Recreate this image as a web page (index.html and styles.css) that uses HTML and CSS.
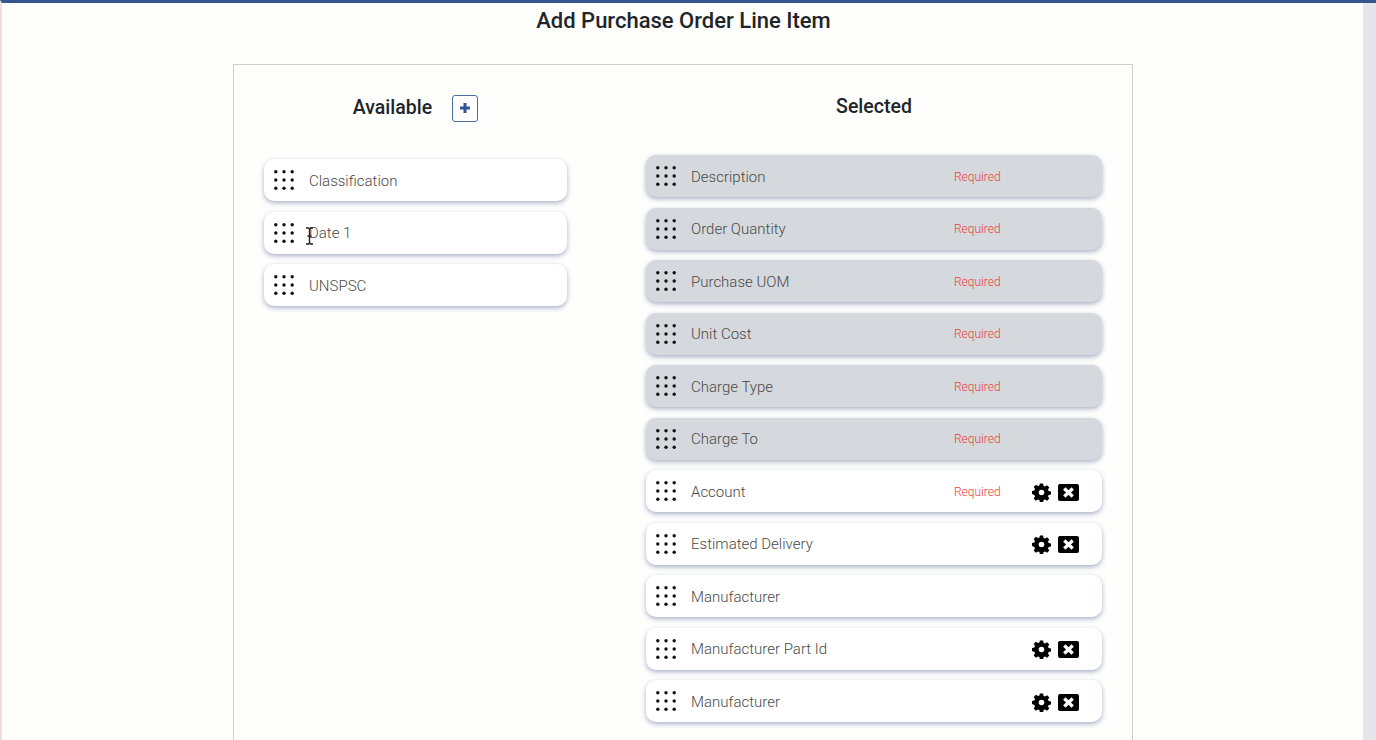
FILE: index.html
```html
<!DOCTYPE html>
<html lang="en">
<head>
    <meta charset="UTF-8">
    <meta name="viewport" content="width=device-width, initial-scale=1.0">
    <title>Add Purchase Order Line Item</title>
    <link rel="stylesheet" href="styles.css">
</head>
<body>

    <svg class="icon-defs" width="0" height="0">
        <symbol id="dots" viewBox="0 0 20 20">
            <circle cx="1.800" cy="1.800" r="1.700"/><circle cx="10" cy="1.800" r="1.700"/><circle cx="18.200" cy="1.800" r="1.700"/>
            <circle cx="1.800" cy="10" r="1.700"/><circle cx="10" cy="10" r="1.700"/><circle cx="18.200" cy="10" r="1.700"/>
            <circle cx="1.800" cy="18.200" r="1.700"/><circle cx="10" cy="18.200" r="1.700"/><circle cx="18.200" cy="18.200" r="1.700"/>
        </symbol>
        <symbol id="gear" viewBox="-0.500 -0.500 19 19">
            <path fill-rule="evenodd" d="M7.400 0h3.200l.5 2.400 1.400.6 2.100-1.300 2.200 2.200-1.300 2.100.6 1.400 2.400.5v3.200l-2.400.5-.6 1.400 1.300 2.100-2.200 2.200-2.100-1.300-1.400.6-.5 2.400H7.400l-.5-2.400-1.400-.6-2.100 1.300-2.200-2.200 1.300-2.100-.6-1.400L-.5 10.600V7.400l2.400-.5.600-1.400-1.300-2.100 2.200-2.200 2.100 1.300 1.400-.6zM9 6.200a2.800 2.800 0 1 0 0 5.600 2.800 2.800 0 0 0 0-5.600z"/>
        </symbol>
        <symbol id="close-box" viewBox="0 0 21 17">
            <rect width="21" height="17" rx="2"/>
            <path d="M6.300 4.600l8.400 7.800M14.700 4.600l-8.400 7.800" stroke="#fff" stroke-width="3.400" fill="none"/>
        </symbol>
    </svg>

    <main class="page">
        <h1 class="page-title">Add Purchase Order Line Item</h1>

        <div class="panel">
            <!-- Available fields -->
            <section class="col col-available">
                <div class="col-head">
                    <h2>Available</h2>
                    <button class="add-btn">
                        <svg width="12" height="12" viewBox="0 0 12 12"><path d="M6 1v10M1 6h10" stroke="#2f5597" stroke-width="3"/></svg>
                    </button>
                </div>
                <div class="field-list">
                    <div class="field"><svg class="grip"><use href="#dots"/></svg><span class="field-name">Classification</span></div>
                    <div class="field">
                        <svg class="grip"><use href="#dots"/></svg><span class="field-name">Date 1</span>
                        <!-- mouse cursor caught in the shot -->
                        <svg class="cursor" width="9" height="18" viewBox="0 0 9 18"><path d="M1 1h2.500L4.500 2l1-1H8M4.500 2v14M1 17h2.500l1-1 1 1H8M2.500 9h4" stroke="#222" stroke-width="1.400" fill="none"/></svg>
                    </div>
                    <div class="field"><svg class="grip"><use href="#dots"/></svg><span class="field-name">UNSPSC</span></div>
                </div>
            </section>

            <!-- Selected fields -->
            <section class="col col-selected">
                <div class="col-head">
                    <h2>Selected</h2>
                </div>
                <div class="field-list">
                    <div class="field locked"><svg class="grip"><use href="#dots"/></svg><span class="field-name">Description</span><span class="required">Required</span></div>
                    <div class="field locked"><svg class="grip"><use href="#dots"/></svg><span class="field-name">Order Quantity</span><span class="required">Required</span></div>
                    <div class="field locked"><svg class="grip"><use href="#dots"/></svg><span class="field-name">Purchase UOM</span><span class="required">Required</span></div>
                    <div class="field locked"><svg class="grip"><use href="#dots"/></svg><span class="field-name">Unit Cost</span><span class="required">Required</span></div>
                    <div class="field locked"><svg class="grip"><use href="#dots"/></svg><span class="field-name">Charge Type</span><span class="required">Required</span></div>
                    <div class="field locked"><svg class="grip"><use href="#dots"/></svg><span class="field-name">Charge To</span><span class="required">Required</span></div>
                    <div class="field"><svg class="grip"><use href="#dots"/></svg><span class="field-name">Account</span><span class="required">Required</span>
                        <span class="actions"><svg class="gear"><use href="#gear"/></svg><svg class="close-box"><use href="#close-box"/></svg></span></div>
                    <div class="field"><svg class="grip"><use href="#dots"/></svg><span class="field-name">Estimated Delivery</span>
                        <span class="actions"><svg class="gear"><use href="#gear"/></svg><svg class="close-box"><use href="#close-box"/></svg></span></div>
                    <div class="field"><svg class="grip"><use href="#dots"/></svg><span class="field-name">Manufacturer</span></div>
                    <div class="field"><svg class="grip"><use href="#dots"/></svg><span class="field-name">Manufacturer Part Id</span>
                        <span class="actions"><svg class="gear"><use href="#gear"/></svg><svg class="close-box"><use href="#close-box"/></svg></span></div>
                    <div class="field"><svg class="grip"><use href="#dots"/></svg><span class="field-name">Manufacturer</span>
                        <span class="actions"><svg class="gear"><use href="#gear"/></svg><svg class="close-box"><use href="#close-box"/></svg></span></div>
                </div>
            </section>
        </div>
    </main>

    <div class="scroll-track"></div>

</body>
</html>
```

FILE: styles.css
```css
/* Page frame */
html, body {
    height: 100%;
}

body {
    margin: 0;
    height: 740px;
    overflow: hidden;
    display: flex;
    background-color: #fefefd;
    border-top: 3px solid #34568f;
    border-left: 2px solid #f0dfdd;
    box-sizing: border-box;
    font-family: Roboto, "Liberation Sans", sans-serif;
    color: #212529;
}

.icon-defs {
    position: absolute;
}

.page {
    flex: 1;
    min-width: 0;
    height: 737px;
    overflow: hidden;
}

.scroll-track {
    width: 13px;
    flex-shrink: 0;
    background-color: #e4e6ec;
}

.page-title {
    margin: 4px 0 0;
    padding-left: 2px;
    font-size: 22px;
    font-weight: 500;
    line-height: 27px;
    text-align: center;
}

/* Panel with the two columns */
.panel {
    margin: 30px 0 0 231px;
    width: 900px;
    height: 720px;
    box-sizing: border-box;
    padding: 0 30px;
    border: 1px solid #cfcfcf;
    display: flex;
    justify-content: space-between;
}

.col-available {
    width: 303px;
}

.col-selected {
    width: 456px;
}

.col-head {
    display: flex;
    align-items: center;
    justify-content: center;
    height: 82px;
}

.col-head h2 {
    margin: 0;
    font-size: 19.500px;
    font-weight: 500;
}

.col-available .col-head {
    padding-top: 4px;
    box-sizing: border-box;
    gap: 20px;
}

.col-available .col-head h2 {
    margin-bottom: 2px;
}

.add-btn {
    width: 26px;
    height: 27px;
    padding: 0;
    display: flex;
    align-items: center;
    justify-content: center;
    background-color: #fff;
    border: 1px solid #4a6c9f;
    border-radius: 3px;
}

/* Field cards */
.field-list {
    display: flex;
    flex-direction: column;
    gap: 10.500px;
    padding-top: 8.200px;
}

.col-available .field-list {
    padding-top: 12.200px;
}

.field {
    position: relative;
    height: 42px;
    flex-shrink: 0;
    display: flex;
    align-items: center;
    padding: 0 23px 0 10px;
    background-color: #fff;
    border-radius: 10px;
    box-shadow: 0 2px 5px rgba(68, 84, 130, 0.45);
    font-size: 15px;
    font-weight: 300;
    color: #4a4a4a;
}

.field.locked {
    background-color: #d5d8dc;
}

.grip {
    width: 20px;
    height: 20px;
    fill: #111;
    flex-shrink: 0;
    margin-right: 15px;
}

.field-name {
    width: 263px;
    flex-shrink: 0;
    padding-top: 1px;
}

.required {
    padding-top: 1px;
    font-size: 12px;
    font-weight: 300;
    color: #f03c3c;
}

.actions {
    margin-left: auto;
    padding-top: 2px;
    display: flex;
    align-items: center;
    gap: 7px;
}

.gear {
    width: 19px;
    height: 19px;
    fill: #000;
}

.close-box {
    width: 21px;
    height: 17px;
    fill: #000;
}

.cursor {
    position: absolute;
    left: 41px;
    top: 15px;
}
```
